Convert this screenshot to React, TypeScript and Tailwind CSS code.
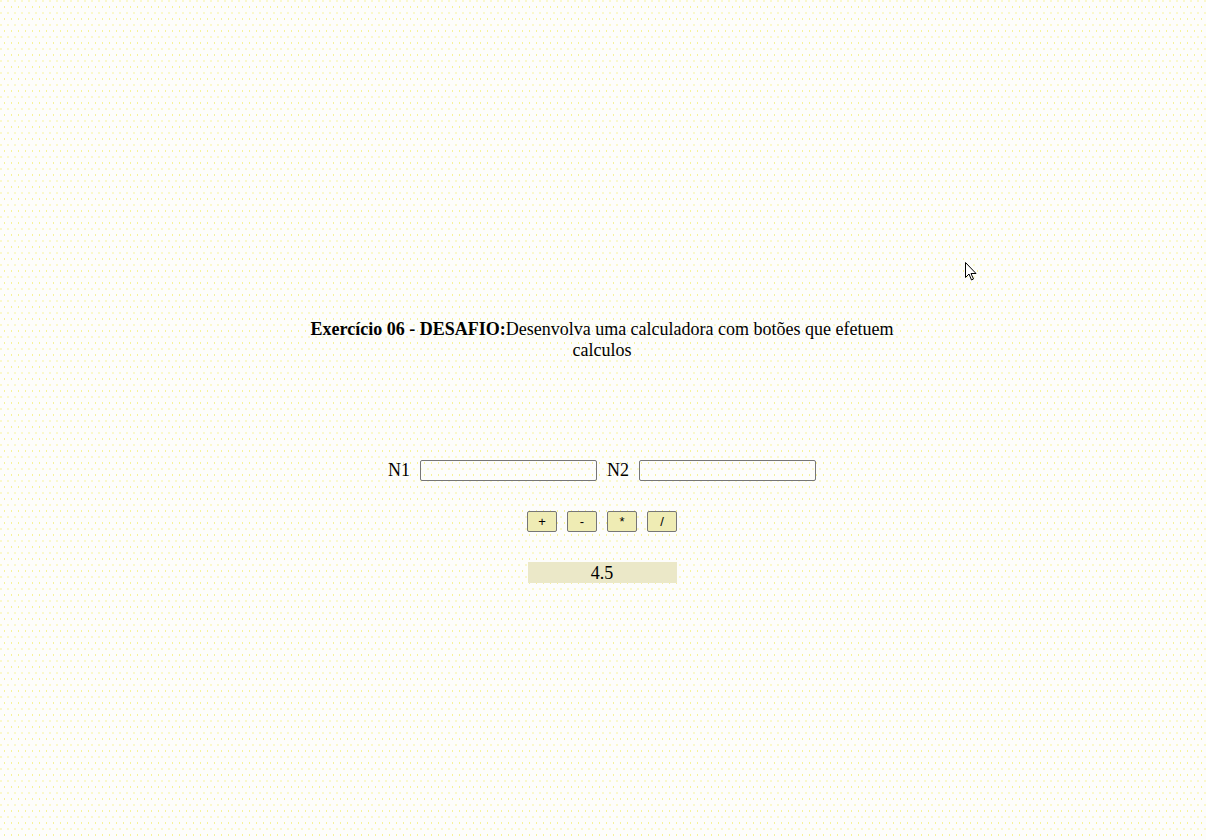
import React from "react";

export default function App() {
  return (
    <div
      className="relative min-h-[840px] w-full bg-[#fdfdfb] bg-[radial-gradient(circle,#f6f29a_0.7px,transparent_1.1px),radial-gradient(circle,#f6f29a_0.7px,transparent_1.1px)] bg-[length:7px_12px] bg-[position:1px_1px,4.5px_7px] text-black"
      style={{ fontFamily: '"Liberation Serif", "Times New Roman", serif' }}
    >
      <div className="flex flex-col items-center pr-[2px] pt-[319px]">
        <p className="w-[600px] text-center text-[18px] leading-[21px]">
          <b>Exercício 06 - DESAFIO:</b>Desenvolva uma calculadora com botões que efetuem calculos
        </p>

        <div className="mt-[99px] flex h-[21px] items-center text-[18px] leading-[21px]">
          <span className="mr-[10px]">N1</span>
          <input
            type="text"
            className="h-[21px] w-[177px] rounded-[2px] border border-[#767676] bg-transparent px-1 outline-none"
          />
          <span className="ml-[10px] mr-[10px]">N2</span>
          <input
            type="text"
            className="h-[21px] w-[177px] rounded-[2px] border border-[#767676] bg-transparent px-1 outline-none"
          />
        </div>

        <div
          className="mt-[30px] flex gap-[10px] text-[13px]"
          style={{ fontFamily: '"Liberation Sans", Arial, sans-serif' }}
        >
          {["+", "-", "*", "/"].map((op) => (
            <button
              key={op}
              className="flex h-[21px] w-[30px] items-center justify-center rounded-[2px] border border-[#767676] bg-[#efecb4] leading-none"
            >
              {op}
            </button>
          ))}
        </div>

        <div className="mt-[30px] flex h-[21px] w-[149px] items-center justify-center bg-[#ebe8c8] text-[18px] leading-none">
          4.5
        </div>
      </div>

      <svg
        className="absolute left-[965px] top-[262px]"
        width="13"
        height="20"
        viewBox="0 0 13 20"
      >
        <path
          d="M0.5 0.5 L0.5 15.5 L4 12 L6.5 18 L8.5 17 L6 11.5 L11 11.5 Z"
          fill="#fff"
          stroke="#000"
          strokeWidth="1"
          strokeLinejoin="miter"
        />
      </svg>
    </div>
  );
}
